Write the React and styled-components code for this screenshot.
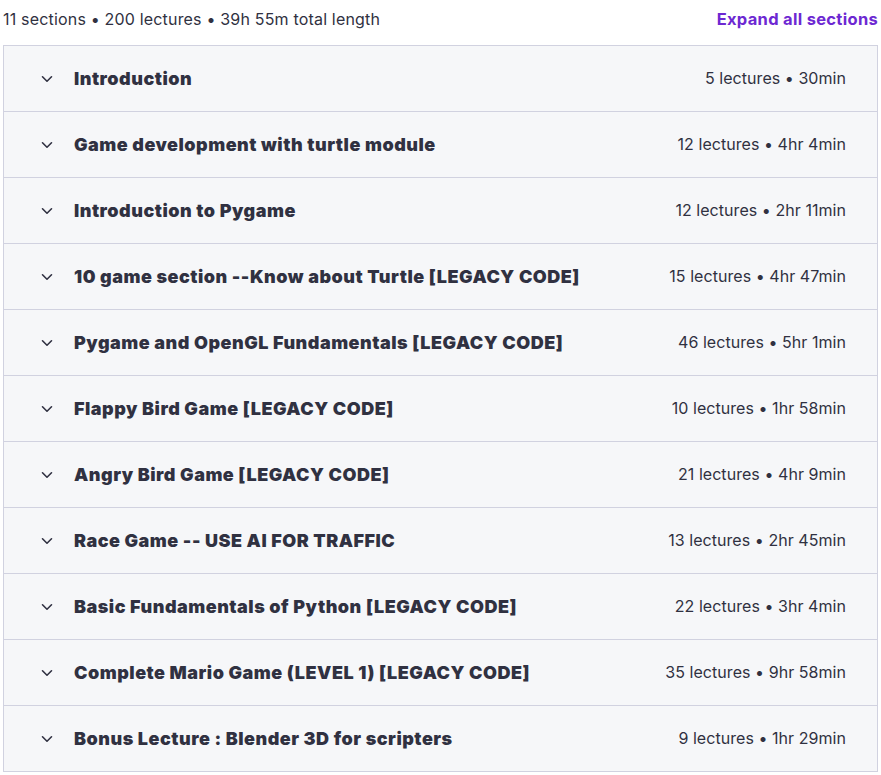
import React from 'react';
import styled, { createGlobalStyle } from 'styled-components';

const sections = [
	{ title: 'Introduction', lectures: 5, length: '30min' },
	{ title: 'Game development with turtle module', lectures: 12, length: '4hr 4min' },
	{ title: 'Introduction to Pygame', lectures: 12, length: '2hr 11min' },
	{ title: '10 game section --Know about Turtle [LEGACY CODE]', lectures: 15, length: '4hr 47min' },
	{ title: 'Pygame and OpenGL Fundamentals [LEGACY CODE]', lectures: 46, length: '5hr 1min' },
	{ title: 'Flappy Bird Game [LEGACY CODE]', lectures: 10, length: '1hr 58min' },
	{ title: 'Angry Bird Game [LEGACY CODE]', lectures: 21, length: '4hr 9min' },
	{ title: 'Race Game -- USE AI FOR TRAFFIC', lectures: 13, length: '2hr 45min' },
	{ title: 'Basic Fundamentals of Python [LEGACY CODE]', lectures: 22, length: '3hr 4min' },
	{ title: 'Complete Mario Game (LEVEL 1) [LEGACY CODE]', lectures: 35, length: '9hr 58min' },
	{ title: 'Bonus Lecture : Blender 3D for scripters', lectures: 9, length: '1hr 29min' },
];

export default function App() {
	return (
		<>
			<GlobalStyle />
			<StyledPage>
				<StyledHeader>
					<StyledSummary>11 sections • 200 lectures • 39h 55m total length</StyledSummary>
					<StyledExpand type="button">Expand all sections</StyledExpand>
				</StyledHeader>
				<StyledList>
					{sections.map(section => (
						<StyledRow key={section.title}>
							<StyledChevron viewBox="0 0 12 8" aria-hidden="true">
								<path d="M1.5 1.8 L6 6.2 L10.5 1.8" />
							</StyledChevron>
							<StyledTitle>{section.title}</StyledTitle>
							<StyledMeta>
								{section.lectures} lectures • {section.length}
							</StyledMeta>
						</StyledRow>
					))}
				</StyledList>
			</StyledPage>
		</>
	);
}
/* --------------------Styling --------------------------------*/
const GlobalStyle = createGlobalStyle`
	body {
		margin: 0;
		background: #fff;
		color: #303141;
		font-family: Inter, 'Noto Sans', sans-serif;
	}
`;

const StyledPage = styled.div`
	width: 881px;
	padding: 0 3px 0 3px;
	box-sizing: border-box;
`;

const StyledHeader = styled.div`
	display: flex;
	justify-content: space-between;
	align-items: center;
	height: 45px;
	padding-bottom: 7px;
	box-sizing: border-box;
`;

const StyledSummary = styled.span`
	font-size: 16px;
	letter-spacing: 0.18px;
	color: #303141;
`;

const StyledExpand = styled.button`
	margin: 0;
	padding: 0;
	border: none;
	background: none;
	color: #6d28d2;
	font-family: inherit;
	font-size: 16.5px;
	font-weight: 700;
	letter-spacing: 0.3px;
	cursor: pointer;
`;

const StyledList = styled.div`
	display: flex;
	flex-direction: column;
	border: 1px solid #d1d2e0;
	border-bottom: none;
`;

const StyledRow = styled.div`
	display: flex;
	align-items: center;
	height: 66px;
	padding: 0 31px 0 37px;
	box-sizing: border-box;
	border-bottom: 1px solid #d1d2e0;
	background: #f6f7f9;
`;

const StyledChevron = styled.svg`
	width: 12px;
	height: 8px;
	flex-shrink: 0;
	margin-right: 21px;
	fill: none;
	stroke: #303141;
	stroke-width: 1.6;
	stroke-linecap: round;
	stroke-linejoin: round;
`;

const StyledTitle = styled.span`
	flex: 1;
	font-size: 18px;
	font-weight: 900;
	letter-spacing: 0.5px;
	color: #303141;
`;

const StyledMeta = styled.span`
	margin-top: -2px;
	font-size: 16px;
	letter-spacing: 0.05px;
	color: #303141;
`;
